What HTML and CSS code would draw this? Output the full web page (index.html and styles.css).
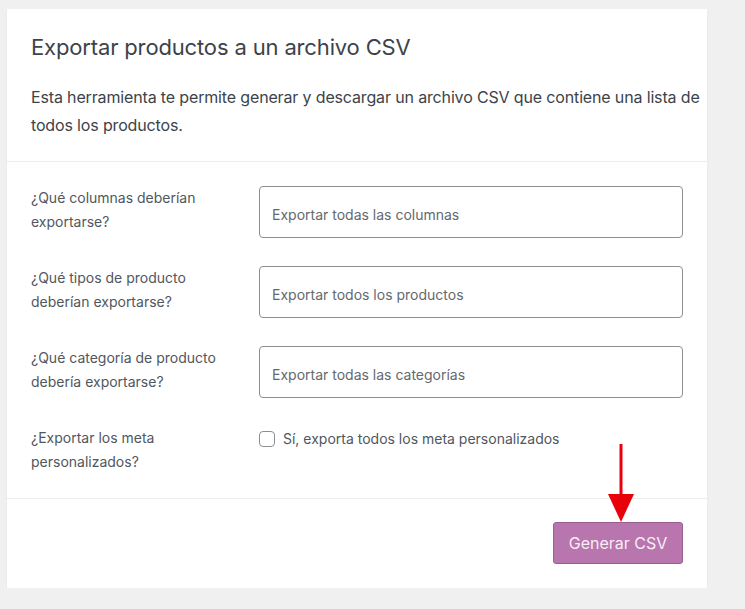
FILE: index.html
```html
<!DOCTYPE html>
<html lang="es">
<head>
  <meta charset="UTF-8">
  <title>Exportar productos</title>
  <link rel="stylesheet" href="styles.css">
</head>
<body>
  <div class="card">
    <header class="card-header">
      <h2>Exportar productos a un archivo CSV</h2>
      <p>Esta herramienta te permite generar y descargar un archivo CSV que contiene una lista de todos los productos.</p>
    </header>

    <section class="card-body">
      <div class="row">
        <label for="cols">¿Qué columnas deberían exportarse?</label>
        <div class="field"><input id="cols" type="text" placeholder="Exportar todas las columnas"></div>
      </div>
      <div class="row">
        <label for="types">¿Qué tipos de producto deberían exportarse?</label>
        <div class="field"><input id="types" type="text" placeholder="Exportar todos los productos"></div>
      </div>
      <div class="row">
        <label for="cats">¿Qué categoría de producto debería exportarse?</label>
        <div class="field"><input id="cats" type="text" placeholder="Exportar todas las categorías"></div>
      </div>
      <div class="row">
        <label for="meta">¿Exportar los meta personalizados?</label>
        <div class="field check">
          <input id="meta" type="checkbox">
          <span>Sí, exporta todos los meta personalizados</span>
        </div>
      </div>
    </section>

    <footer class="card-footer">
      <button type="button" class="btn">Generar CSV</button>
      <svg class="arrow" width="30" height="80" viewBox="0 0 30 80">
        <rect x="13.5" y="0" width="3" height="54" fill="#e8000b"/>
        <polygon points="2,50 28,50 15,78" fill="#e8000b"/>
      </svg>
    </footer>
  </div>
</body>
</html>
```

FILE: styles.css
```css
* {
  box-sizing: border-box;
}

body {
  margin: 0;
  padding: 9px 0 0 7px;
  background: #f0f0f1;
  font-family: Inter, "Liberation Sans", sans-serif;
  color: #50575e;
}

.card {
  width: 700px;
  background: #ffffff;
  box-shadow: 0 1px 2px rgba(0, 0, 0, 0.06);
  position: relative;
}

.card-header {
  padding: 24px 0 22px 24px;
  border-bottom: 1px solid #ececec;
  letter-spacing: -0.15px;
}

.card-header h2 {
  margin: 0 0 22px;
  font-size: 22px;
  line-height: 28px;
  font-weight: 400;
  color: #3c434a;
}

.card-header p {
  margin: 0;
  font-size: 16px;
  line-height: 28px;
  color: #3c434a;
}

.card-body {
  padding: 24px;
  border-bottom: 1px solid #ececec;
  display: flex;
  flex-direction: column;
  gap: 28px;
}

.row {
  display: grid;
  grid-template-columns: 228px 1fr;
  align-items: start;
}

.row label {
  font-size: 14px;
  line-height: 24px;
  width: 200px;
  color: #50575e;
}

.field input[type="text"] {
  width: 100%;
  height: 52px;
  padding: 5px 12px 0;
  border: 1px solid #8c8f94;
  border-radius: 4px;
  font-family: Inter, "Liberation Sans", sans-serif;
  font-size: 14px;
  color: #50575e;
}

.field input::placeholder {
  color: #646970;
}

.check {
  display: flex;
  align-items: center;
  gap: 8px;
  font-size: 14px;
  line-height: 24px;
  padding-top: 1px;
}

.check input {
  margin: 0;
  width: 16px;
  height: 16px;
  appearance: none;
  border: 1px solid #8c8f94;
  border-radius: 4px;
  background: #fff;
}

.card-footer {
  padding: 23px 24px 24px;
  display: flex;
  justify-content: flex-end;
  position: relative;
}

.btn {
  width: 130px;
  height: 42px;
  background: #b975ad;
  border: 1px solid #9c5d93;
  border-radius: 3px;
  color: #f7eef6;
  font-family: Inter, "Liberation Sans", sans-serif;
  font-size: 16px;
  cursor: pointer;
}

.arrow {
  position: absolute;
  left: 599px;
  top: -55px;
}
```
